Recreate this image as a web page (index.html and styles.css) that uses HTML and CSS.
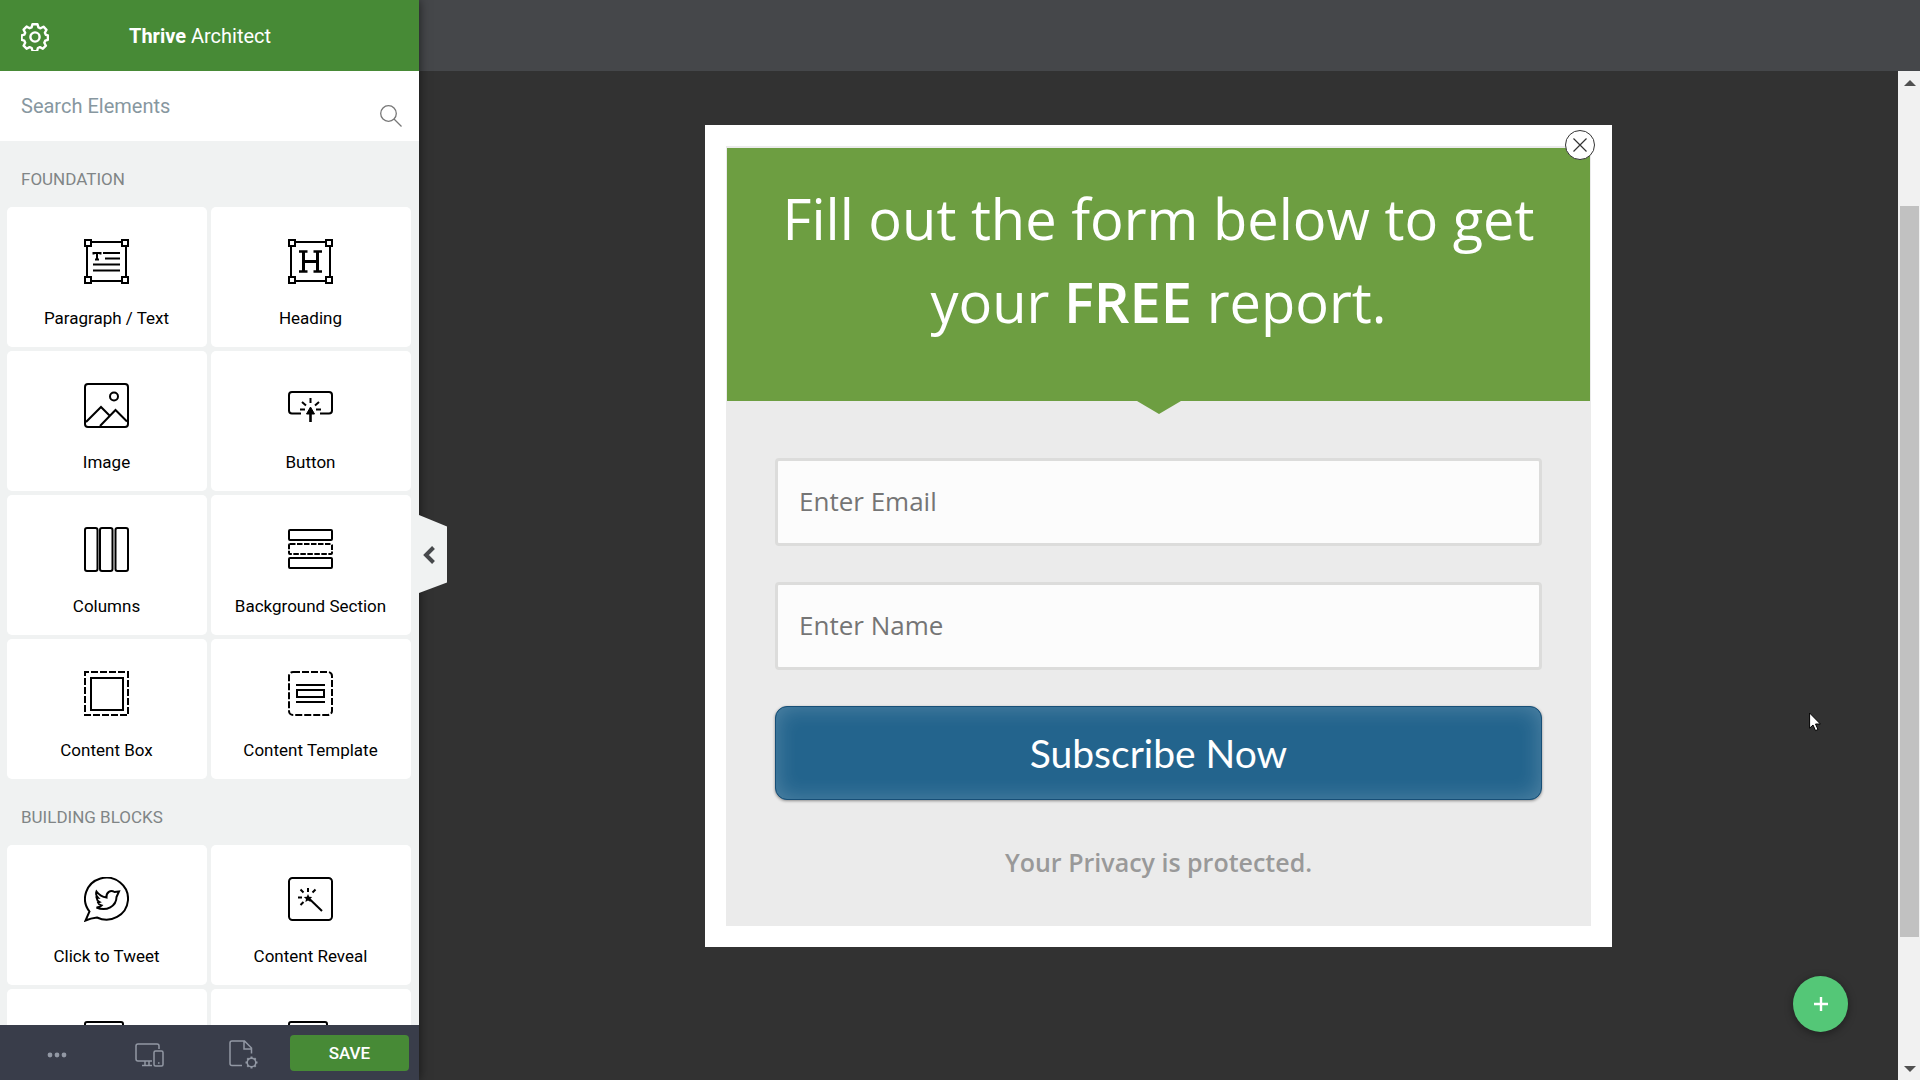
FILE: index.html
```html
<!DOCTYPE html>
<html lang="en">
<head>
<meta charset="utf-8">
<title>Thrive Architect</title>
<meta name="viewport" content="width=device-width, initial-scale=1">
<link rel="stylesheet" href="styles.css">
</head>
<body>
<div class="app">
  <aside class="sidebar">
    <header class="brand">
      <button class="icon-button" type="button" aria-label="Settings">
        <svg width="28" height="28" viewBox="0 0 28 28" fill="none" stroke="currentColor" stroke-width="2.4" stroke-linejoin="round"><path d="M11.5 1.2h5l.9 3.2 2.1.9 3-1.6 3 3.1-1.6 3 .9 2 2.1.6v4.4l-2.700.9-.9 2 1.600 3-3 3-3-1.600-2 .9-.9 3.200h-4.400l-.9-3.200-2.100-.9-3 1.600-3-3 1.600-3-.9-2-2.700-.9v-4.400l2.700-.7.9-2-1.600-3 3-3.100 3 1.600 2-.9z"/><circle cx="14" cy="14" r="4.600"/></svg>
      </button>
      <h1 class="brand-name"><strong>Thrive</strong> Architect</h1>
    </header>
    <div class="search">
      <input class="search-input" type="search" placeholder="Search Elements" aria-label="Search Elements">
      <svg class="search-icon" width="22" height="22" viewBox="0 0 22 22" fill="none" stroke="currentColor" stroke-width="1.3"><circle cx="8.5" cy="8.5" r="7.8"/><path d="M14 14l7.5 7.5"/></svg>
    </div>
    <div class="elements">
      <h2 class="group-title">FOUNDATION</h2>
      <div class="cards">
        <button class="card" type="button">
          <svg class="card-icon" viewBox="0 0 45 45"><path d="M8 3h29M8 42h29M3 8v29M42 8v29"/><path d="M1 1h6v6H1zM38 1h6v6h-6zM1 38h6v6H1zM38 38h6v6h-6z"/><path d="M19 14h17M21 19.5h15M9 25.500h27M9 31.500h27M9.500 15.500V14h7v1.500M13 14v6.500M11 20.500h4"/></svg>
          <span>Paragraph / Text</span>
        </button>
        <button class="card" type="button">
          <svg class="card-icon" viewBox="0 0 45 45"><path d="M8 3h29M8 42h29M3 8v29M42 8v29"/><path d="M1 1h6v6H1zM38 1h6v6h-6zM1 38h6v6H1zM38 38h6v6h-6z"/><path d="M15.500 13v19M29.500 13v19M15.500 22.500h14" stroke-width="3"/><path d="M11 12.500h8.500M25.500 12.500H34M11 32.500h8.500M25.500 32.500H34" stroke-width="2.400"/></svg>
          <span>Heading</span>
        </button>
        <button class="card" type="button">
          <svg class="card-icon" viewBox="0 0 45 45"><rect x="1" y="1" width="43" height="43" rx="3"/><circle cx="30" cy="13.500" r="4"/><path d="M2 39l15-15 9 9M16 43l15.500-16L43 38.500"/></svg>
          <span>Image</span>
        </button>
        <button class="card" type="button">
          <svg class="card-icon" viewBox="0 0 45 45"><path d="M13 30.500H4a3 3 0 0 1-3-3V12a3 3 0 0 1 3-3h37a3 3 0 0 1 3 3v15.500a3 3 0 0 1-3 3h-9"/><path d="M22.500 30v9" stroke-width="2.600"/><path d="M22.500 24l4 7h-8z" fill="currentColor" stroke-width="1"/><path d="M22.500 15v5M14 19l4 3.500M31 19l-4 3.500M12 26.500h5M28 26.500h5"/></svg>
          <span>Button</span>
        </button>
        <button class="card" type="button">
          <svg class="card-icon" viewBox="0 0 45 45"><rect x="1" y="1" width="12.500" height="43" rx="2"/><rect x="16" y="1" width="12.500" height="43" rx="2"/><rect x="31.500" y="1" width="12.500" height="43" rx="2"/></svg>
          <span>Columns</span>
        </button>
        <button class="card" type="button">
          <svg class="card-icon" viewBox="0 0 45 45"><rect x="1" y="3" width="43" height="10" rx="1"/><rect x="1" y="17" width="43" height="10" rx="1" stroke-dasharray="5.500 1.500"/><rect x="1" y="31" width="43" height="10" rx="1"/></svg>
          <span>Background Section</span>
        </button>
        <button class="card" type="button">
          <svg class="card-icon" viewBox="0 0 45 45"><rect x="1" y="1" width="43" height="43" stroke-dasharray="7 2" stroke-dashoffset="3"/><rect x="7" y="7" width="32" height="32"/></svg>
          <span>Content Box</span>
        </button>
        <button class="card" type="button">
          <svg class="card-icon" viewBox="0 0 45 45"><rect x="1" y="1" width="43" height="43" rx="4" stroke-dasharray="7 2"/><path d="M8 14h29M8 31h29M9 19h27v7H9z"/></svg>
          <span>Content Template</span>
        </button>
      </div>
      <h2 class="group-title">BUILDING BLOCKS</h2>
      <div class="cards">
        <button class="card" type="button">
          <svg class="card-icon" viewBox="0 0 45 45"><path d="M5.500 34.500A21.500 21 0 1 1 13 40.500C9 41 5 42 1.500 43.500z"/><path d="M12.500 14.500c3 4 6 5.500 10 6-.5-5 4-8 8-5.500l4.500-.5-2.500 5.500c0 9-10 15-20 10.500 2 0 3.500-.5 5-2-2-.5-3-1.500-3.500-3l1.500-.5c-2-1.200-2.800-2.500-3-4.500l1.500.2c-1.800-2-2.400-4-1.500-6.200z"/></svg>
          <span>Click to Tweet</span>
        </button>
        <button class="card" type="button">
          <svg class="card-icon" viewBox="0 0 45 45"><rect x="1" y="1" width="43" height="42" rx="3.500"/><path d="M20.500 21L34 34"/><path d="M20 17l1.200 2.700 3 .3-2.200 2 .6 3-2.600-1.500-2.600 1.500.6-3-2.200-2 3-.3z" fill="currentColor" stroke="none"/><path d="M20 11v4M12.500 12.500l3 3M27.500 12.500l-3 3M10 20.500h4M12.500 28l3-3"/></svg>
          <span>Content Reveal</span>
        </button>
        <button class="card" type="button" aria-label="Content block">
          <svg class="card-icon" viewBox="0 0 45 45"><rect x="1" y="1" width="38" height="42" rx="2"/></svg>
        </button>
        <button class="card" type="button" aria-label="Contact form">
          <svg class="card-icon" viewBox="0 0 45 45"><rect x="1" y="1" width="38" height="42" rx="2"/></svg>
        </button>
      </div>
    </div>
    <footer class="toolbar">
      <button class="tool" type="button" aria-label="More options">
        <svg width="20" height="6" viewBox="0 0 20 6" fill="currentColor"><circle cx="3" cy="3" r="2.400"/><circle cx="10" cy="3" r="2.400"/><circle cx="17" cy="3" r="2.400"/></svg>
      </button>
      <button class="tool" type="button" aria-label="Responsive view">
        <svg width="29" height="24" viewBox="0 0 29 24" fill="none" stroke="currentColor" stroke-width="1.500"><path d="M17 18H3a2 2 0 0 1-2-2V3a2 2 0 0 1 2-2h19a2 2 0 0 1 2 2v3M10 18v4M14 18v4M7 22.500h10"/><rect x="19" y="8" width="9" height="15" rx="1.500"/><path d="M23 20h1.500"/></svg>
      </button>
      <button class="tool" type="button" aria-label="Page settings">
        <svg width="29" height="29" viewBox="0 0 29 29" fill="none" stroke="currentColor" stroke-width="1.500"><path d="M13 25.500H3a2 2 0 0 1-2-2V3a2 2 0 0 1 2-2h12.500l7 7v5.500M15 1v8h7.500"/><circle cx="22.500" cy="22.500" r="4.300"/><path d="M22.500 16.500v2M22.500 26.500v2M16.500 22.500h2M26.500 22.500h2M18.300 18.300l1.400 1.400M25.300 25.300l1.400 1.400M26.700 18.300l-1.400 1.400M19.700 25.300l-1.400 1.400" stroke-width="2"/></svg>
      </button>
      <button class="save" type="button">SAVE</button>
    </footer>
    <button class="collapse" type="button" aria-label="Collapse sidebar">
      <svg width="28" height="80" viewBox="0 0 28 80"><path d="M0 1l28 11.500v56L0 79z" fill="#f0f2f2"/><path d="M14.500 33.500L7 41l7.500 7.500" fill="none" stroke="#47494c" stroke-width="4"/></svg>
    </button>
  </aside>
  <div class="workspace">
    <div class="topbar"></div>
    <div class="stage">
      <main class="canvas">
        <form class="lightbox">
          <button class="close" type="button" aria-label="Close"><svg width="14" height="14" viewBox="0 0 14 14" stroke="currentColor" stroke-width="1.200"><path d="M.5.500l13 13M13.500.500l-13 13"/></svg></button>
          <div class="panel">
            <h2 class="headline">Fill out the form below to get your <strong>FREE</strong> report.</h2>
            <div class="fields">
              <input class="field" type="email" placeholder="Enter Email" aria-label="Enter Email">
              <input class="field" type="text" placeholder="Enter Name" aria-label="Enter Name">
              <button class="subscribe" type="button">Subscribe Now</button>
              <p class="privacy">Your Privacy is protected.</p>
            </div>
          </div>
        </form>
      </main>
      <div class="scrollbar" aria-hidden="true">
        <svg width="12" height="6" viewBox="0 0 12 6" fill="#505050"><path d="M0 6l6-6 6 6z"/></svg>
        <div class="track"><div class="thumb"></div></div>
        <svg width="12" height="6" viewBox="0 0 12 6" fill="#505050"><path d="M0 0l6 6 6-6z"/></svg>
      </div>
    </div>
  </div>
  <button class="add" type="button" aria-label="Add element"><svg width="14" height="14" viewBox="0 0 14 14" stroke="currentColor" stroke-width="2.400"><path d="M7 0v14M0 7h14"/></svg></button>
  <svg class="pointer" width="12" height="20" viewBox="0 0 12 20"><path d="M.6 1v15.200l3.400-3.200 2.500 5.600 2.500-1.100-2.500-5.500h4.900z" fill="#fff" stroke="#000"/></svg>
</div>
</body>
</html>
```
FILE: styles.css
```css
* {
  box-sizing: border-box;
}

body {
  margin: 0;
  background: #323232;
  font-family: Roboto, "Liberation Sans", sans-serif;
}

h1, h2, p {
  margin: 0;
  font-weight: 400;
}

button, input {
  border: 0;
  padding: 0;
  background: none;
  color: inherit;
  font: inherit;
}

svg {
  display: block;
}

.app {
  position: relative;
  display: flex;
  height: 100vh;
  overflow: hidden;
}

/* Sidebar */

.sidebar {
  position: relative;
  z-index: 1;
  flex: none;
  display: flex;
  flex-direction: column;
  width: 419px;
  background: #f0f2f2;
  box-shadow: 0 0 10px rgba(0, 0, 0, 0.6);
}

.brand {
  flex: none;
  display: flex;
  align-items: center;
  height: 71px;
  padding: 2px 21px 0;
  gap: 80px;
  background: #478a36;
  color: #fff;
}

.brand-name {
  padding-bottom: 2px;
  font-size: 20px;
  line-height: 24px;
}

.brand-name strong {
  font-weight: 700;
}

.search {
  flex: none;
  display: flex;
  align-items: center;
  height: 70px;
  padding: 0 17px 0 21px;
  background: #fff;
}

.search-input {
  flex: 1;
  min-width: 0;
  height: 70px;
  outline: 0;
  font-size: 20px;
}

.search-input::placeholder {
  color: #8797a0;
}

.search-icon {
  margin-top: 20px;
  color: #777;
}

.elements {
  flex: 1;
  min-height: 0;
  overflow: hidden;
}

.group-title {
  padding: 28px 21px 18px;
  color: #808586;
  font-size: 17px;
  line-height: 20px;
}

.cards {
  display: grid;
  grid-template-columns: 1fr 1fr;
  gap: 4px;
  padding: 0 8px 0 7px;
}

.card {
  display: flex;
  flex-direction: column;
  align-items: center;
  gap: 24px;
  height: 140px;
  padding: 32px 1px 0 0;
  border-radius: 5px;
  background: #fff;
  color: #000;
  font-size: 17px;
  line-height: 20px;
}

.card-icon {
  width: 45px;
  height: 45px;
  fill: none;
  stroke: currentColor;
  stroke-width: 2;
}

.toolbar {
  flex: none;
  display: flex;
  align-items: center;
  height: 55px;
  padding: 0 10px;
  background: #393d4a;
  color: #9298a4;
}

.tool {
  flex: 1;
  display: grid;
  place-items: center;
  padding-top: 4px;
}

.save {
  width: 119px;
  height: 36px;
  border-radius: 4px;
  background: #478a36;
  color: #fff;
  font-size: 17px;
  font-weight: 500;
}

.collapse {
  position: absolute;
  top: 514px;
  left: 100%;
}

/* Workspace */

.workspace {
  flex: 1;
  display: flex;
  flex-direction: column;
  min-width: 0;
}

.topbar {
  flex: none;
  height: 71px;
  background: #45474a;
}

.stage {
  flex: 1;
  display: flex;
  min-height: 0;
}

.canvas {
  flex: 1;
  min-width: 0;
  padding: 54px 40px;
}

.lightbox {
  position: relative;
  max-width: 907px;
  margin: 0 auto;
  padding: 21px;
  background: #fff;
  font-family: "Open Sans", sans-serif;
}

.close {
  position: absolute;
  top: 5px;
  right: 17px;
  z-index: 1;
  display: grid;
  place-items: center;
  width: 30px;
  height: 30px;
  border: 1px solid #333;
  border-radius: 50%;
  background: #fff;
  color: #333;
}

.panel {
  padding: 2px 1px 0;
  background: #ebebeb;
}

.headline {
  position: relative;
  padding: 29px 40px 58px;
  background: #6d9e41;
  color: #fff;
  font-size: 56px;
  line-height: 83px;
  text-align: center;
}

.headline strong {
  font-weight: 600;
}

.headline::after {
  content: "";
  position: absolute;
  top: 100%;
  left: calc(50% - 22px);
  border: solid transparent;
  border-width: 13px 22px 0;
  border-top-color: #6d9e41;
}

.fields {
  display: flex;
  flex-direction: column;
  padding: 57px 48px 47px;
}

.field {
  height: 88px;
  margin-bottom: 36px;
  padding: 0 21px 2px;
  border: 3px solid #dcdcdb;
  border-radius: 4px;
  background: #fcfcfc;
  outline: 0;
  font-size: 26px;
}

.field::placeholder {
  color: #757575;
}

.subscribe {
  height: 94px;
  border: 1px solid #174f77;
  border-radius: 12px;
  background: #23648d;
  box-shadow: inset 0 0 22px rgba(255, 255, 255, 0.22), 0 1px 3px rgba(0, 0, 0, 0.4);
  color: #fff;
  font-family: Lato, sans-serif;
  font-size: 39px;
}

.privacy {
  margin-top: 45px;
  color: #999;
  font-size: 25px;
  font-weight: 600;
  line-height: 34px;
  text-align: center;
}

.scrollbar {
  display: flex;
  flex-direction: column;
  align-items: center;
  width: 22px;
  padding: 9px 1px 8px 2px;
  background: #f1f1f1;
}

.track {
  flex: 1;
  align-self: stretch;
  padding-top: 120px;
}

.thumb {
  height: 85%;
  background: #c1c1c1;
}

.add {
  position: absolute;
  right: 72px;
  bottom: 48px;
  display: grid;
  place-items: center;
  width: 55px;
  height: 56px;
  border-radius: 50%;
  background: #54c777;
  box-shadow: 0 2px 8px rgba(0, 0, 0, 0.4);
  color: #fff;
}

.pointer {
  position: absolute;
  top: 712px;
  left: 1809px;
}
```
